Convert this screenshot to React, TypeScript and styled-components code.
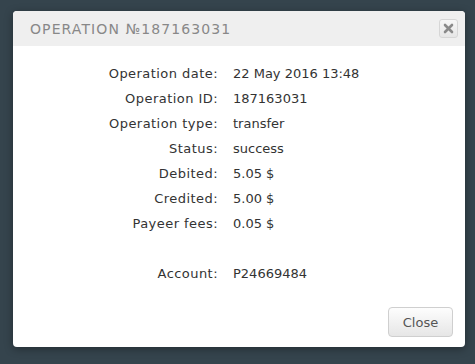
import React from 'react';
import styled, { createGlobalStyle } from 'styled-components';

const GlobalStyle = createGlobalStyle`
  html, body {
    margin: 0;
    padding: 0;
    background: #35444d;
  }
  body {
    font-family: "DejaVu Sans", "Liberation Sans", sans-serif;
  }
`;

const Page = styled.div`
  width: 475px;
  height: 364px;
  padding: 11px 0 0 13px;
  box-sizing: border-box;
`;

const Dialog = styled.div`
  width: 452px;
  height: 336px;
  background: #fff;
  border-radius: 4px;
  box-shadow: 0 2px 8px rgba(0, 0, 0, 0.35);
  display: flex;
  flex-direction: column;
  overflow: hidden;
`;

const Header = styled.div`
  height: 35px;
  background: #efefef;
  display: flex;
  align-items: center;
  justify-content: space-between;
  padding: 0 7px 0 17px;
`;

const Title = styled.h2`
  margin: 0;
  font-family: "DejaVu Sans", sans-serif;
  font-weight: normal;
  font-size: 14px;
  letter-spacing: 1.1px;
  color: #888;
  text-transform: uppercase;
`;

const XButton = styled.button`
  width: 19px;
  height: 19px;
  padding: 0;
  border: 1px solid #d6d6d6;
  border-radius: 3px;
  background: linear-gradient(#f7f7f7, #e6e6e6);
  display: flex;
  align-items: center;
  justify-content: center;
`;

const Body = styled.div`
  flex: 1;
  padding-top: 15px;
`;

const Row = styled.div`
  display: grid;
  grid-template-columns: 205px 1fr;
  column-gap: 15px;
  height: 25px;
  align-items: center;
  font-size: 13px;
  color: #333;
`;

const Label = styled.span`
  text-align: right;
  letter-spacing: 0.45px;
`;

const Value = styled.span``;

const Footer = styled.div`
  display: flex;
  justify-content: flex-end;
  padding: 0 12px 10px 0;
`;

const CloseButton = styled.button`
  width: 65px;
  height: 30px;
  border: 1px solid #cfcfcf;
  border-radius: 4px;
  background: linear-gradient(#fdfdfd, #e6e6e6);
  font-family: "DejaVu Sans", sans-serif;
  font-size: 13px;
  color: #555;
  padding: 0;
`;

const rows: [string, string][] = [
  ['Operation date:', '22 May 2016 13:48'],
  ['Operation ID:', '187163031'],
  ['Operation type:', 'transfer'],
  ['Status:', 'success'],
  ['Debited:', '5.05 $'],
  ['Credited:', '5.00 $'],
  ['Payeer fees:', '0.05 $'],
  ['', ''],
  ['Account:', 'P24669484'],
];

export default function App() {
  return (
    <Page>
      <GlobalStyle />
      <Dialog>
        <Header>
          <Title>Operation №187163031</Title>
          <XButton aria-label='close'>
            <svg width='11' height='11' viewBox='0 0 11 11'>
              <path d='M2 2 L9 9 M9 2 L2 9' stroke='#8a8a8a' strokeWidth='2.6' strokeLinecap='round' />
            </svg>
          </XButton>
        </Header>
        <Body>
          {rows.map(([label, value], i) => (
            <Row key={i}>
              <Label>{label}</Label>
              <Value>{value}</Value>
            </Row>
          ))}
        </Body>
        <Footer>
          <CloseButton>Close</CloseButton>
        </Footer>
      </Dialog>
    </Page>
  );
}
